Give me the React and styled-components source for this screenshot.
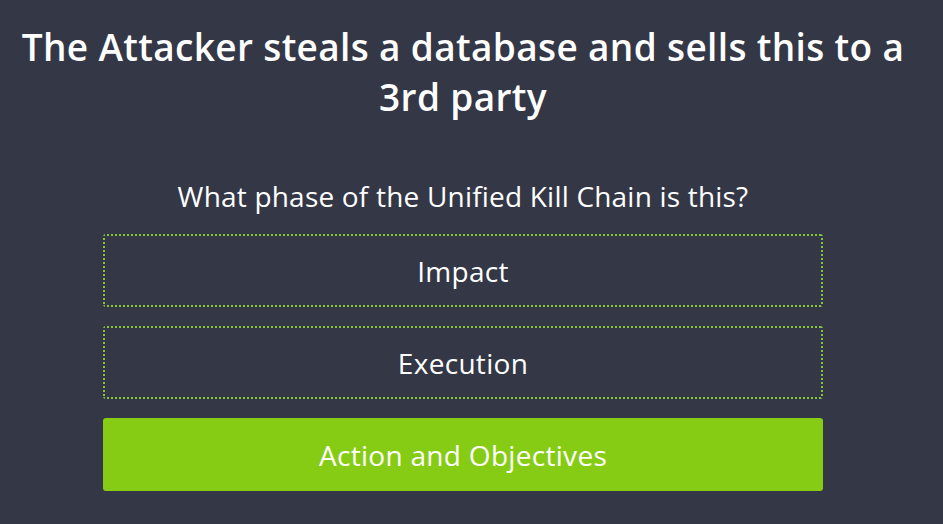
import React from 'react';
import styled, { createGlobalStyle, css } from 'styled-components';

const Global = createGlobalStyle`
	html, body {
		margin: 0;
		padding: 0;
		background: #343746;
	}
	body {
		font-family: 'Open Sans', 'Noto Sans', sans-serif;
		color: #fff;
	}
`;

const Page = styled.div`
	width: 926px;
	height: 524px;
	overflow: hidden;
	background: #343746;
	display: flex;
	flex-direction: column;
	align-items: center;
	padding-top: 22px;
	box-sizing: border-box;
`;

const Title = styled.h1`
	margin: 0;
	width: 900px;
	text-align: center;
	font-size: 37px;
	font-weight: 600;
	line-height: 50px;
	letter-spacing: 0.35px;
`;

const Question = styled.p`
	margin: 54px 0 18px;
	font-size: 28px;
	line-height: 40px;
	font-weight: 400;
	letter-spacing: 0.2px;
`;

const Options = styled.div`
	display: flex;
	flex-direction: column;
	gap: 19px;
	width: 720px;
`;

const dot = '#86c43a';

// square dotted border, 2px dots on a 4px pitch
const dotted = css`
	background:
		repeating-linear-gradient(90deg, ${dot} 0 2px, transparent 2px 4px) left top / 100% 2px no-repeat,
		repeating-linear-gradient(90deg, ${dot} 0 2px, transparent 2px 4px) left bottom / 100% 2px no-repeat,
		repeating-linear-gradient(180deg, ${dot} 0 2px, transparent 2px 4px) left top / 2px 100% no-repeat,
		repeating-linear-gradient(180deg, ${dot} 0 2px, transparent 2px 4px) right top / 2px 100% no-repeat;
`;

const Option = styled.div`
	height: 73px;
	box-sizing: border-box;
	border-radius: 3px;
	display: flex;
	align-items: center;
	justify-content: center;
	font-size: 28px;
	letter-spacing: 0.3px;
	color: #fff;
	${(p) => (p.selected ? 'background: #86cc14;' : dotted)}
`;

const options = [
	{ label: 'Impact' },
	{ label: 'Execution' },
	{ label: 'Action and Objectives', selected: true },
];

const App = () => {
	return (
		<Page>
			<Global />
			<Title>The Attacker steals a database and sells this to a 3rd party</Title>
			<Question>What phase of the Unified Kill Chain is this?</Question>
			<Options>
				{options.map((o) => (
					<Option key={o.label} selected={o.selected}>
						{o.label}
					</Option>
				))}
			</Options>
		</Page>
	);
};

export default App;
